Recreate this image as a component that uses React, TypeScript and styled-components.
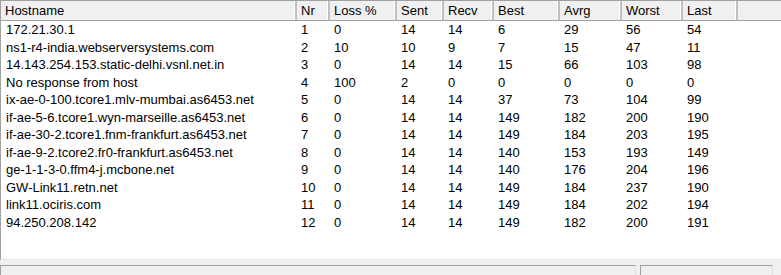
import React from 'react';
import styled, { createGlobalStyle } from 'styled-components';

const GlobalStyle = createGlobalStyle`
  html, body {
    margin: 0;
    padding: 0;
    background: #f0f0f0;
  }
  body {
    font-family: "Liberation Sans", Arial, sans-serif;
    font-size: 13px;
    color: #000;
  }
`;

const COLUMNS = '296px 33px 67px 47px 50px 66px 62px 61px 55px 1fr';

const Window = styled.div`
  width: 781px;
  height: 275px;
  display: flex;
  flex-direction: column;
  overflow: hidden;
`;

const ListView = styled.div`
  flex: 1;
  display: flex;
  flex-direction: column;
  background: #fff;
  border-top: 1px solid #a0a0a0;
  border-left: 1px solid #a0a0a0;
  border-bottom: 1px solid #e3e3e3;
`;

const Header = styled.div`
  display: grid;
  grid-template-columns: ${COLUMNS};
  height: 19px;
  background: #f0f0f0;
  border-bottom: 1px solid #a0a0a0;
`;

const HeaderCell = styled.div`
  display: flex;
  align-items: center;
  padding-left: 4px;
  border-right: 2px solid #c0c0c0;
  box-shadow: inset -1px 0 0 #fff;
  white-space: nowrap;
  overflow: hidden;

  &:last-child {
    border-right: none;
    box-shadow: none;
  }
`;

const Rows = styled.div`
  display: flex;
  flex-direction: column;
`;

const Row = styled.div`
  display: grid;
  grid-template-columns: ${COLUMNS};
  height: 17.5px;
  align-items: center;
`;

const Cell = styled.div<{ $first?: boolean }>`
  padding-left: ${(p) => (p.$first ? '5px' : '4px')};
  white-space: nowrap;
  overflow: hidden;
`;

const StatusBar = styled.div`
  height: 10px;
  display: flex;
  gap: 4px;
  padding: 5px 8px 0 0;
  background: #f0f0f0;
`;

const Panel = styled.div<{ $width?: number }>`
  flex: ${(p) => (p.$width ? `0 0 ${p.$width}px` : '1')};
  border-top: 1px solid #a0a0a0;
  border-left: 1px solid #a0a0a0;
  border-right: 1px solid #e3e3e3;
`;

const headers = ['Hostname', 'Nr', 'Loss %', 'Sent', 'Recv', 'Best', 'Avrg', 'Worst', 'Last'];

const hops: (string | number)[][] = [
  ['172.21.30.1', 1, 0, 14, 14, 6, 29, 56, 54],
  ['ns1-r4-india.webserversystems.com', 2, 10, 10, 9, 7, 15, 47, 11],
  ['14.143.254.153.static-delhi.vsnl.net.in', 3, 0, 14, 14, 15, 66, 103, 98],
  ['No response from host', 4, 100, 2, 0, 0, 0, 0, 0],
  ['ix-ae-0-100.tcore1.mlv-mumbai.as6453.net', 5, 0, 14, 14, 37, 73, 104, 99],
  ['if-ae-5-6.tcore1.wyn-marseille.as6453.net', 6, 0, 14, 14, 149, 182, 200, 190],
  ['if-ae-30-2.tcore1.fnm-frankfurt.as6453.net', 7, 0, 14, 14, 149, 184, 203, 195],
  ['if-ae-9-2.tcore2.fr0-frankfurt.as6453.net', 8, 0, 14, 14, 140, 153, 193, 149],
  ['ge-1-1-3-0.ffm4-j.mcbone.net', 9, 0, 14, 14, 140, 176, 204, 196],
  ['GW-Link11.retn.net', 10, 0, 14, 14, 149, 184, 237, 190],
  ['link11.ociris.com', 11, 0, 14, 14, 149, 184, 202, 194],
  ['94.250.208.142', 12, 0, 14, 14, 149, 182, 200, 191],
];

export default function App() {
  return (
    <Window>
      <GlobalStyle />
      <ListView>
        <Header>
          {headers.map((h) => (
            <HeaderCell key={h}>{h}</HeaderCell>
          ))}
          <HeaderCell />
        </Header>
        <Rows>
          {hops.map((hop) => (
            <Row key={String(hop[1])}>
              {hop.map((v, i) => (
                <Cell key={i} $first={i === 0}>
                  {v}
                </Cell>
              ))}
              <Cell />
            </Row>
          ))}
        </Rows>
      </ListView>
      <StatusBar>
        <Panel />
        <Panel $width={131} />
      </StatusBar>
    </Window>
  );
}
